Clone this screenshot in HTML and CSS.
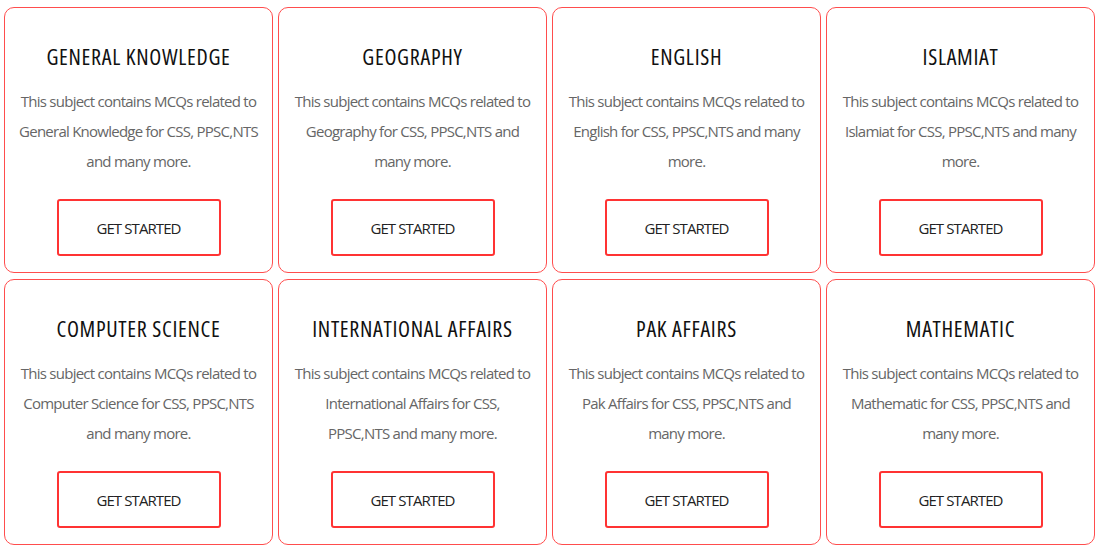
FILE: index.html
```html
<!DOCTYPE html>
<html lang="en">

<head>
  <meta charset="UTF-8">
  <meta name="viewport" content="width=device-width, initial-scale=1.0">
  <title>Subjects</title>

  <link rel="stylesheet" href="styles.css">
</head>

<body>
  <div class="subjects">
    <div class="card">
      <h2>GENERAL KNOWLEDGE</h2>
      <p>This subject contains MCQs related to General Knowledge for CSS, PPSC,NTS and many more.</p>
      <button class="start">GET STARTED</button>
    </div>
    <div class="card">
      <h2>GEOGRAPHY</h2>
      <p>This subject contains MCQs related to Geography for CSS, PPSC,NTS and many more.</p>
      <button class="start">GET STARTED</button>
    </div>
    <div class="card">
      <h2>ENGLISH</h2>
      <p>This subject contains MCQs related to English for CSS, PPSC,NTS and many more.</p>
      <button class="start">GET STARTED</button>
    </div>
    <div class="card">
      <h2>ISLAMIAT</h2>
      <p>This subject contains MCQs related to Islamiat for CSS, PPSC,NTS and many more.</p>
      <button class="start">GET STARTED</button>
    </div>
    <div class="card">
      <h2>COMPUTER SCIENCE</h2>
      <p>This subject contains MCQs related to Computer Science for CSS, PPSC,NTS and many more.</p>
      <button class="start">GET STARTED</button>
    </div>
    <div class="card">
      <h2>INTERNATIONAL AFFAIRS</h2>
      <p>This subject contains MCQs related to International Affairs for CSS,<br>PPSC,NTS and many more.</p>
      <button class="start">GET STARTED</button>
    </div>
    <div class="card">
      <h2>PAK AFFAIRS</h2>
      <p>This subject contains MCQs related to Pak Affairs for CSS, PPSC,NTS and many more.</p>
      <button class="start">GET STARTED</button>
    </div>
    <div class="card">
      <h2>MATHEMATIC</h2>
      <p>This subject contains MCQs related to Mathematic for CSS, PPSC,NTS and many more.</p>
      <button class="start">GET STARTED</button>
    </div>
  </div>
</body>

</html>
```

FILE: styles.css
```css
body {
  margin: 0;
  background: #fff;
  font-family: "Open Sans", sans-serif;
}

.subjects {
  display: grid;
  grid-template-columns: repeat(4, 269px);
  grid-auto-rows: 266px;
  column-gap: 5px;
  row-gap: 6px;
  padding: 7px 0 0 4px;
}

.card {
  box-sizing: border-box;
  border: 1px solid #ff4d4d;
  border-radius: 10px;
  text-align: center;
  padding: 0 14px;
}

.card h2 {
  margin: 35px 0 0;
  font-family: "Open Sans", sans-serif;
  font-stretch: condensed;
  font-weight: normal;
  font-size: 22px;
  line-height: 26px;
  letter-spacing: 0.7px;
  color: #111;
}

.card p {
  margin: 17px 0 0;
  font-size: 15px;
  letter-spacing: -0.75px;
  line-height: 30px;
  color: #666;
}

.card .start {
  margin-top: 23px;
  width: 164px;
  height: 57px;
  background: #fff;
  border: 2px solid #ff3333;
  border-radius: 3px;
  font-family: "Open Sans", sans-serif;
  font-size: 15px;
  letter-spacing: -0.9px;
  color: #222;
  cursor: pointer;
}
```
